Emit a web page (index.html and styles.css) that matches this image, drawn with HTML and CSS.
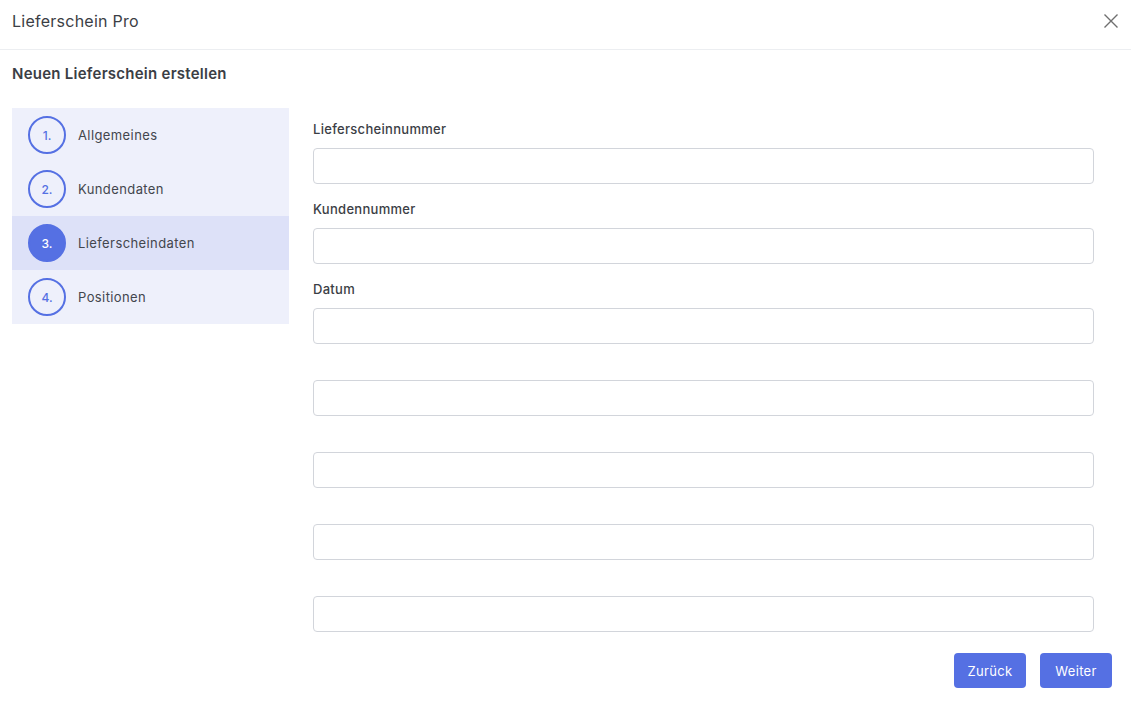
FILE: index.html
```html
<!DOCTYPE html>
<html lang="de">
<head>
<meta charset="utf-8">
<title>Lieferschein Pro</title>
<link rel="stylesheet" href="styles.css">
</head>
<body>
<header class="header">
  <div class="title">Lieferschein Pro</div>
  <button class="close" aria-label="Schließen">
    <svg width="16" height="16" viewBox="0 0 16 16"><path d="M1.5 1.5 L14.5 14.5 M14.5 1.5 L1.5 14.5" stroke="#6f6f6f" stroke-width="1.4" fill="none"/></svg>
  </button>
</header>
<h2 class="subtitle">Neuen Lieferschein erstellen</h2>
<div class="content">
  <nav class="steps">
    <div class="step"><span class="num">1.</span><span class="label">Allgemeines</span></div>
    <div class="step"><span class="num">2.</span><span class="label">Kundendaten</span></div>
    <div class="step active"><span class="num">3.</span><span class="label">Lieferscheindaten</span></div>
    <div class="step"><span class="num">4.</span><span class="label">Positionen</span></div>
  </nav>
  <main class="main">
    <div class="form">
      <div class="group"><label class="field-label">Lieferscheinnummer</label><input class="input" type="text"></div>
      <div class="group"><label class="field-label">Kundennummer</label><input class="input" type="text"></div>
      <div class="group"><label class="field-label">Datum</label><input class="input" type="text"></div>
      <div class="group empty"><input class="input" type="text"></div>
      <div class="group empty"><input class="input" type="text"></div>
      <div class="group empty"><input class="input" type="text"></div>
      <div class="group empty"><input class="input" type="text"></div>
    </div>
    <div class="footer">
      <button class="btn">Zurück</button>
      <button class="btn">Weiter</button>
    </div>
  </main>
</div>
</body>
</html>
```
FILE: styles.css
```css
* { box-sizing: border-box; }
body {
  margin: 0;
  font-family: Inter, "Open Sans", "Liberation Sans", sans-serif;
  color: #3f424a;
  background: #fff;
}
.header {
  height: 50px;
  border-bottom: 1px solid #eceef1;
  display: flex;
  align-items: center;
  justify-content: space-between;
  padding: 0 12px 8px 12px;
}
.title {
  font-size: 16px;
  color: #3b3e45;
  letter-spacing: 0.25px;
}
.close {
  border: 0;
  background: none;
  padding: 0;
  width: 16px;
  height: 16px;
  cursor: pointer;
}
.subtitle {
  margin: 0;
  padding: 14px 12px 0;
  font-size: 15px;
  line-height: 20px;
  font-weight: 600;
  letter-spacing: 0.25px;
  color: #3b3e45;
}
.content {
  display: flex;
  margin-top: 24px;
  padding-left: 12px;
}
.steps {
  width: 277px;
  background: #eef0fb;
  align-self: flex-start;
}
.step {
  height: 54px;
  display: flex;
  align-items: center;
  padding-left: 16px;
}
.step.active { background: #dde1f8; }
.num {
  width: 38px;
  height: 38px;
  border-radius: 50%;
  border: 2px solid #5570e3;
  color: #5570e3;
  display: flex;
  align-items: center;
  justify-content: center;
  font-size: 12px;
  font-weight: 500;
}
.step.active .num {
  background: #5570e3;
  color: #fff;
}
.step .label {
  margin-left: 12px;
  font-size: 13px;
  letter-spacing: 0.4px;
  color: #43464d;
}
.main {
  flex: 1;
  padding-left: 24px;
  padding-top: 12px;
}
.form {
  width: 781px;
  display: flex;
  flex-direction: column;
}
.group { margin-bottom: 16px; }
.group:last-child { margin-bottom: 0; }
.group.empty { margin-top: 20px; }
.field-label {
  display: block;
  font-size: 13px;
  line-height: 18px;
  margin-bottom: 10px;
  color: #3b3e45;
  font-weight: 500;
  letter-spacing: 0.3px;
}
.input {
  display: block;
  width: 100%;
  height: 36px;
  border: 1px solid #d2d5db;
  border-radius: 4px;
  background: #fff;
  padding: 0 10px;
  font: inherit;
}
.footer {
  display: flex;
  justify-content: flex-end;
  gap: 14px;
  margin-top: 21px;
  padding-right: 19px;
}
.btn {
  width: 72px;
  height: 35px;
  border: 0;
  border-radius: 4px;
  background: #5570e3;
  color: #fff;
  font: inherit;
  font-size: 13px;
  letter-spacing: 0.3px;
  cursor: pointer;
}
```
